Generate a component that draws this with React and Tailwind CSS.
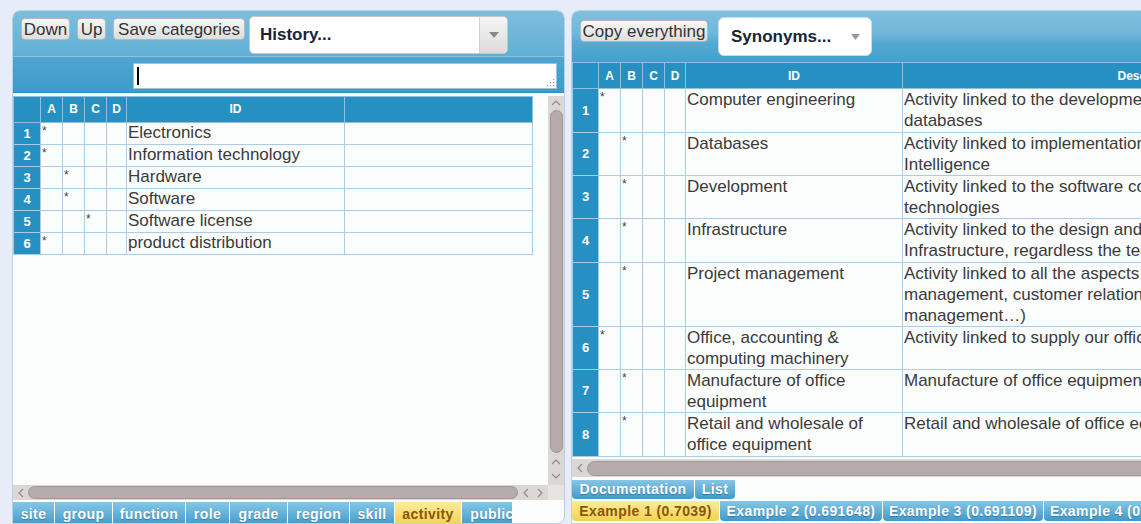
import React from "react";
import clsx from "clsx";

const leftRows = [
  { n: 1, mark: 0, id: "Electronics" },
  { n: 2, mark: 0, id: "Information technology" },
  { n: 3, mark: 1, id: "Hardware" },
  { n: 4, mark: 1, id: "Software" },
  { n: 5, mark: 2, id: "Software license" },
  { n: 6, mark: 0, id: "product distribution" },
];

const rightRows = [
  {
    n: 1,
    mark: 0,
    h: "h-[44px]",
    id: ["Computer engineering"],
    desc: ["Activity linked to the development of software and", "databases"],
  },
  {
    n: 2,
    mark: 1,
    h: "h-[43px]",
    id: ["Databases"],
    desc: ["Activity linked to implementation of Business", "Intelligence"],
  },
  {
    n: 3,
    mark: 1,
    h: "h-[43px]",
    id: ["Development"],
    desc: ["Activity linked to the software components and new", "technologies"],
  },
  {
    n: 4,
    mark: 1,
    h: "h-[44px]",
    id: ["Infrastructure"],
    desc: [
      "Activity linked to the design and maintenance of the",
      "Infrastructure, regardless the technology",
    ],
  },
  {
    n: 5,
    mark: 1,
    h: "h-[64px]",
    id: ["Project management"],
    desc: [
      "Activity linked to all the aspects of project",
      "management, customer relationship, change",
      "management…)",
    ],
  },
  {
    n: 6,
    mark: 0,
    h: "h-[43px]",
    id: ["Office, accounting &", "computing machinery"],
    desc: ["Activity linked to supply our offices with machinery"],
  },
  {
    n: 7,
    mark: 1,
    h: "h-[43px]",
    id: ["Manufacture of office", "equipment"],
    desc: ["Manufacture of office equipment"],
  },
  {
    n: 8,
    mark: 1,
    h: "h-[44px]",
    id: ["Retail and wholesale of", "office equipment"],
    desc: ["Retail and wholesale of office equipment"],
  },
];

const leftTabs = [
  ["site", "w-[41px]"],
  ["group", "w-[57px]"],
  ["function", "w-[72px]"],
  ["role", "w-[43px]"],
  ["grade", "w-[57px]"],
  ["region", "w-[61px]"],
  ["skill", "w-[44px]"],
  ["activity", "w-[66px]", true],
  ["public", "w-[60px]"],
];

const letters = ["A", "B", "C", "D"];

const Chevron = ({ dir }) => {
  const pts = {
    up: "1,6 5,2 9,6",
    down: "1,2 5,6 9,2",
    left: "6,1 2,5 6,9",
    right: "2,1 6,5 2,9",
  }[dir];
  const vertical = dir === "up" || dir === "down";
  return (
    <svg
      width={vertical ? 10 : 8}
      height={vertical ? 8 : 10}
      viewBox={vertical ? "0 0 10 8" : "0 0 8 10"}
      className="flex-none"
    >
      <polyline points={pts} fill="none" stroke="#8c8c8c" strokeWidth="1.2" />
    </svg>
  );
};

const Button = ({ children, className }) => (
  <div
    className={clsx(
      "h-[22px] flex items-center justify-center rounded-[4px] border border-[#b8b8b8] bg-[linear-gradient(180deg,#f6f6f6,#dedede)] text-[17px] leading-none text-[#333] whitespace-nowrap",
      className
    )}
  >
    {children}
  </div>
);

const Tab = ({ label, w, active, h = "h-full" }) => (
  <div
    className={clsx(
      "flex-none flex items-center justify-center rounded-b-[4px] text-[14px] font-bold tracking-[0.4px] whitespace-nowrap overflow-hidden",
      w,
      h,
      active
        ? "bg-[linear-gradient(180deg,#fceb9c,#f3d152)] text-[#8a5608]"
        : "bg-[linear-gradient(180deg,#86c6e5,#3f9acb)] text-white [text-shadow:0_1px_1px_rgba(0,40,80,0.35)]"
    )}
  >
    {label}
  </div>
);

const HeadCell = ({ children }) => (
  <th className="border border-[#8fc1de] bg-[#2790c2] text-white text-[12px] font-bold text-center p-0">
    {children}
  </th>
);

const NumCell = ({ n }) => (
  <td className="border border-[#a9cde6] bg-[#2790c2] text-white text-[13px] font-bold text-center p-0">
    {n}
  </td>
);

const MarkCells = ({ mark }) =>
  letters.map((l, i) => (
    <td
      key={l}
      className="border border-[#a9cde6] align-top p-0 pl-[1px] pt-[2px] text-[12px] leading-none text-[#444]"
    >
      {i === mark ? "*" : ""}
    </td>
  ));

const LeftPanel = () => (
  <div className="w-[553px] h-[514px] flex-none flex flex-col border border-[#bfd0e6] rounded-t-[8px] rounded-br-[8px] bg-[#fbfdfd] overflow-hidden">
    {/* toolbar */}
    <div className="h-[45px] flex items-start gap-[7px] pl-[8px] pt-[5px] bg-[linear-gradient(180deg,#7dbedd,#62afd6)]">
      <Button className="w-[49px] mt-[2px]">Down</Button>
      <Button className="w-[29px] mt-[2px]">Up</Button>
      <Button className="w-[132px] mt-[2px]">Save categories</Button>
      <div className="ml-[-3px] w-[259px] h-[38px] flex rounded-[5px] border border-[#c6c6c6] bg-white overflow-hidden">
        <div className="flex-1 flex items-center pl-[10px] text-[17px] font-bold text-[#16243a]">
          History...
        </div>
        <div className="w-[28px] flex items-center justify-center border-l border-[#d2d2d2] bg-[linear-gradient(180deg,#f5f5f5,#dcdcdc)]">
          <svg width="10" height="6" viewBox="0 0 10 6">
            <polygon points="0,0 10,0 5,6" fill="#8a8a8a" />
          </svg>
        </div>
      </div>
    </div>
    {/* search line */}
    <div className="h-[36px] pt-[6px] pl-[120px] bg-[linear-gradient(180deg,#4fa5cf,#3e9bca)] border-t border-[#8cc4e0]">
      <div className="relative w-[424px] h-[26px] bg-white border border-[#9fc4dc]">
        <div className="absolute left-[3px] top-[3px] w-[1.5px] h-[18px] bg-black" />
        <svg className="absolute right-[1px] bottom-[1px]" width="10" height="10" viewBox="0 0 10 10">
          {[
            [8, 2],
            [8, 5],
            [5, 5],
            [8, 8],
            [5, 8],
            [2, 8],
          ].map(([x, y]) => (
            <rect key={`${x}-${y}`} x={x} y={y} width="1.2" height="1.2" fill="#9a9a9a" />
          ))}
        </svg>
      </div>
    </div>
    {/* grid */}
    <div className="h-[394px] flex pt-[3px] border-t border-[#2f8fc0]">
      <div className="w-[534px] overflow-hidden">
        <table className="w-[519px] table-fixed border-collapse text-[#3a3a3a]">
          <colgroup>
            <col className="w-[27px]" />
            <col className="w-[22px]" />
            <col className="w-[22px]" />
            <col className="w-[22px]" />
            <col className="w-[20px]" />
            <col className="w-[218px]" />
            <col className="w-[188px]" />
          </colgroup>
          <thead>
            <tr className="h-[26px]">
              <HeadCell />
              {letters.map((l) => (
                <HeadCell key={l}>{l}</HeadCell>
              ))}
              <HeadCell>ID</HeadCell>
              <HeadCell />
            </tr>
          </thead>
          <tbody>
            {leftRows.map((r) => (
              <tr key={r.n} className="h-[22px]">
                <NumCell n={r.n} />
                <MarkCells mark={r.mark} />
                <td className="border border-[#a9cde6] p-0 pl-[1px] text-[17px] leading-[20px] whitespace-nowrap">
                  {r.id}
                </td>
                <td className="border border-[#a9cde6] p-0" />
              </tr>
            ))}
          </tbody>
        </table>
      </div>
      <div className="w-[13px]" />
      {/* vertical scrollbar */}
      <div className="w-[16px] flex flex-col items-center bg-[#dbd7d5]">
        <div className="h-[14px] flex items-center">
          <Chevron dir="up" />
        </div>
        <div className="w-[13px] flex-1 rounded-full bg-[#b3acaa] border border-[#9f9895]" />
        <div className="h-[32px] flex flex-col items-center justify-center gap-[6px]">
          <Chevron dir="up" />
          <Chevron dir="down" />
        </div>
      </div>
    </div>
    {/* horizontal scrollbar */}
    <div className="h-[15px] flex items-center bg-[#dbd7d5]">
      <div className="w-[15px] flex justify-center">
        <Chevron dir="left" />
      </div>
      <div className="h-[13px] w-[490px] rounded-full bg-[#b3acaa] border border-[#9f9895]" />
      <div className="w-[30px] flex items-center justify-center gap-[6px]">
        <Chevron dir="left" />
        <Chevron dir="right" />
      </div>
      <div className="flex-1 h-full bg-[#e6e3e1]" />
    </div>
    {/* category tabs */}
    <div className="h-[22px] mt-[1px] flex overflow-hidden">
      <div className="w-[499px] flex items-start gap-[1px] pt-[1px] overflow-hidden">
        {leftTabs.map(([label, w, active]) => (
          <Tab key={label} label={label} w={w} active={active} h="h-[24px]" />
        ))}
      </div>
    </div>
  </div>
);

const RightPanel = () => (
  <div className="w-[620px] h-[514px] flex-none flex flex-col border border-[#bfd0e6] rounded-tl-[8px] bg-[#fbfdfd] overflow-hidden">
    {/* toolbar */}
    <div className="h-[51px] flex-none flex items-start pl-[8px] bg-[linear-gradient(180deg,#80bfde_0%,#70b7da_45%,#55a9d3_62%,#44a0cd_100%)]">
      <Button className="w-[128px] mt-[9px]">Copy everything</Button>
      <div className="ml-[10px] mt-[6px] w-[154px] h-[39px] flex items-center rounded-[6px] border border-[#cfd8df] bg-white">
        <span className="pl-[12px] text-[17px] font-bold text-[#16243a]">Synonyms...</span>
        <svg className="ml-[20px]" width="9" height="6" viewBox="0 0 9 6">
          <polygon points="0,0 9,0 4.5,6" fill="#9a9a9a" />
        </svg>
      </div>
    </div>
    {/* grid */}
    <div className="overflow-hidden">
      <table className="w-[826px] table-fixed border-collapse text-[#3a3a3a]">
        <colgroup>
          <col className="w-[26px]" />
          <col className="w-[22px]" />
          <col className="w-[22px]" />
          <col className="w-[22px]" />
          <col className="w-[21px]" />
          <col className="w-[217px]" />
          <col className="w-[496px]" />
        </colgroup>
        <thead>
          <tr className="h-[26px]">
            <HeadCell />
            {letters.map((l) => (
              <HeadCell key={l}>{l}</HeadCell>
            ))}
            <HeadCell>ID</HeadCell>
            <HeadCell>Description</HeadCell>
          </tr>
        </thead>
        <tbody>
          {rightRows.map((r) => (
            <tr key={r.n} className={r.h}>
              <NumCell n={r.n} />
              <MarkCells mark={r.mark} />
              <td className="border border-[#a9cde6] align-top p-0 pl-[1px] text-[17px] leading-[21px]">
                {r.id.map((line) => (
                  <div key={line} className="whitespace-nowrap">
                    {line}
                  </div>
                ))}
              </td>
              <td className="border border-[#a9cde6] align-top p-0 pl-[1px] text-[17px] leading-[21px]">
                {r.desc.map((line) => (
                  <div key={line} className="whitespace-nowrap">
                    {line}
                  </div>
                ))}
              </td>
            </tr>
          ))}
        </tbody>
      </table>
    </div>
    {/* horizontal scrollbar */}
    <div className="mt-[2px] h-[18px] flex-none flex items-center bg-[#dbd7d5]">
      <div className="w-[15px] flex justify-center">
        <Chevron dir="left" />
      </div>
      <div className="h-[15px] flex-1 rounded-l-full bg-[#b3acaa] border border-[#9f9895]" />
    </div>
    {/* view tabs */}
    <div className="mt-[3px] h-[19px] flex-none flex gap-[1px]">
      <Tab label="Documentation" w="w-[122px]" />
      <Tab label="List" w="w-[40px]" />
    </div>
    <div className="mt-[2px] h-[20px] flex-none flex gap-[1px]">
      <Tab label="Example 1 (0.7039)" w="w-[147px]" active />
      <Tab label="Example 2 (0.691648)" w="w-[162px]" />
      <Tab label="Example 3 (0.691109)" w="w-[160px]" />
      <Tab label="Example 4 (0.690112)" w="w-[160px]" />
    </div>
  </div>
);

export default function App() {
  return (
    <div className="w-[1141px] h-[524px] overflow-hidden bg-[#e7edf8] flex items-start gap-[6px] pt-[10px] pl-[12px] font-['Liberation_Sans',Arial,sans-serif]">
      <LeftPanel />
      <RightPanel />
    </div>
  );
}
